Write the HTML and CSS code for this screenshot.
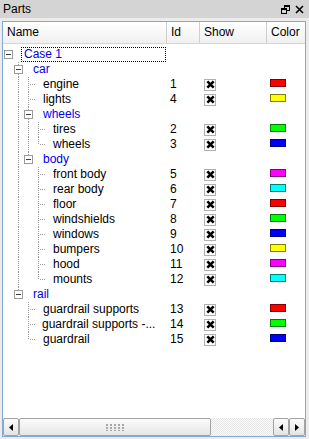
FILE: index.html
```html
<!DOCTYPE html>
<html>
<head>
<meta charset="utf-8">
<link rel="stylesheet" href="styles.css">
</head>
<body>
<div class="title">
  <span class="title-text">Parts</span>
  <span class="title-icons">
    <svg width="9" height="9" viewBox="0 0 9 9"><rect x="3.5" y="0.5" width="5" height="5" fill="none" stroke="#000"/><rect x="3" y="0" width="6" height="2"/><rect x="0.5" y="3.5" width="5" height="5" fill="#d4d4d4" stroke="#000"/><rect x="0" y="3" width="6" height="2"/></svg>
    <svg width="9" height="9" viewBox="0 0 9 9"><path d="M1 1L8 8M8 1L1 8" stroke="#000" stroke-width="1.6"/></svg>
  </span>
</div>
<div class="panel">
  <div class="header">
    <div class="hcell">Name</div>
    <div class="hcell">Id</div>
    <div class="hcell">Show</div>
    <div class="hcell last">Color</div>
  </div>
  <div class="rows">
    <div class="row">
      <div class="c-name"><span class="ind"><span class="box"></span></span><span class="lbl grp focus">Case 1</span></div>
      <div></div><div></div><div></div>
    </div>
    <div class="row">
      <div class="c-name"><span class="ind"></span><span class="ind v"><span class="box"></span></span><span class="lbl grp">car</span></div>
      <div></div><div></div><div></div>
    </div>
    <div class="row">
      <div class="c-name"><span class="ind"></span><span class="ind v"></span><span class="ind t"></span><span class="lbl">engine</span></div>
      <div class="c-id">1</div><div class="c-show"><span class="chk"><svg width="9" height="9" viewBox="0 0 9 9"><path d="M1.3 1.3L7.7 7.7M7.7 1.3L1.3 7.7" stroke="#000" stroke-width="2.6"/></svg></span></div><div class="c-color"><span class="sw red"></span></div>
    </div>
    <div class="row">
      <div class="c-name"><span class="ind"></span><span class="ind v"></span><span class="ind t"></span><span class="lbl">lights</span></div>
      <div class="c-id">4</div><div class="c-show"><span class="chk"><svg width="9" height="9" viewBox="0 0 9 9"><path d="M1.3 1.3L7.7 7.7M7.7 1.3L1.3 7.7" stroke="#000" stroke-width="2.6"/></svg></span></div><div class="c-color"><span class="sw yellow"></span></div>
    </div>
    <div class="row">
      <div class="c-name"><span class="ind"></span><span class="ind v"></span><span class="ind v"><span class="box"></span></span><span class="lbl grp">wheels</span></div>
      <div></div><div></div><div></div>
    </div>
    <div class="row">
      <div class="c-name"><span class="ind"></span><span class="ind v"></span><span class="ind v"></span><span class="ind t"></span><span class="lbl">tires</span></div>
      <div class="c-id">2</div><div class="c-show"><span class="chk"><svg width="9" height="9" viewBox="0 0 9 9"><path d="M1.3 1.3L7.7 7.7M7.7 1.3L1.3 7.7" stroke="#000" stroke-width="2.6"/></svg></span></div><div class="c-color"><span class="sw green"></span></div>
    </div>
    <div class="row">
      <div class="c-name"><span class="ind"></span><span class="ind v"></span><span class="ind v"></span><span class="ind l"></span><span class="lbl">wheels</span></div>
      <div class="c-id">3</div><div class="c-show"><span class="chk"><svg width="9" height="9" viewBox="0 0 9 9"><path d="M1.3 1.3L7.7 7.7M7.7 1.3L1.3 7.7" stroke="#000" stroke-width="2.6"/></svg></span></div><div class="c-color"><span class="sw blue"></span></div>
    </div>
    <div class="row">
      <div class="c-name"><span class="ind"></span><span class="ind v"></span><span class="ind h"><span class="box"></span></span><span class="lbl grp">body</span></div>
      <div></div><div></div><div></div>
    </div>
    <div class="row">
      <div class="c-name"><span class="ind"></span><span class="ind v"></span><span class="ind"></span><span class="ind t"></span><span class="lbl">front body</span></div>
      <div class="c-id">5</div><div class="c-show"><span class="chk"><svg width="9" height="9" viewBox="0 0 9 9"><path d="M1.3 1.3L7.7 7.7M7.7 1.3L1.3 7.7" stroke="#000" stroke-width="2.6"/></svg></span></div><div class="c-color"><span class="sw magenta"></span></div>
    </div>
    <div class="row">
      <div class="c-name"><span class="ind"></span><span class="ind v"></span><span class="ind"></span><span class="ind t"></span><span class="lbl">rear body</span></div>
      <div class="c-id">6</div><div class="c-show"><span class="chk"><svg width="9" height="9" viewBox="0 0 9 9"><path d="M1.3 1.3L7.7 7.7M7.7 1.3L1.3 7.7" stroke="#000" stroke-width="2.6"/></svg></span></div><div class="c-color"><span class="sw cyan"></span></div>
    </div>
    <div class="row">
      <div class="c-name"><span class="ind"></span><span class="ind v"></span><span class="ind"></span><span class="ind t"></span><span class="lbl">floor</span></div>
      <div class="c-id">7</div><div class="c-show"><span class="chk"><svg width="9" height="9" viewBox="0 0 9 9"><path d="M1.3 1.3L7.7 7.7M7.7 1.3L1.3 7.7" stroke="#000" stroke-width="2.6"/></svg></span></div><div class="c-color"><span class="sw red"></span></div>
    </div>
    <div class="row">
      <div class="c-name"><span class="ind"></span><span class="ind v"></span><span class="ind"></span><span class="ind t"></span><span class="lbl">windshields</span></div>
      <div class="c-id">8</div><div class="c-show"><span class="chk"><svg width="9" height="9" viewBox="0 0 9 9"><path d="M1.3 1.3L7.7 7.7M7.7 1.3L1.3 7.7" stroke="#000" stroke-width="2.6"/></svg></span></div><div class="c-color"><span class="sw green"></span></div>
    </div>
    <div class="row">
      <div class="c-name"><span class="ind"></span><span class="ind v"></span><span class="ind"></span><span class="ind t"></span><span class="lbl">windows</span></div>
      <div class="c-id">9</div><div class="c-show"><span class="chk"><svg width="9" height="9" viewBox="0 0 9 9"><path d="M1.3 1.3L7.7 7.7M7.7 1.3L1.3 7.7" stroke="#000" stroke-width="2.6"/></svg></span></div><div class="c-color"><span class="sw blue"></span></div>
    </div>
    <div class="row">
      <div class="c-name"><span class="ind"></span><span class="ind v"></span><span class="ind"></span><span class="ind t"></span><span class="lbl">bumpers</span></div>
      <div class="c-id">10</div><div class="c-show"><span class="chk"><svg width="9" height="9" viewBox="0 0 9 9"><path d="M1.3 1.3L7.7 7.7M7.7 1.3L1.3 7.7" stroke="#000" stroke-width="2.6"/></svg></span></div><div class="c-color"><span class="sw yellow"></span></div>
    </div>
    <div class="row">
      <div class="c-name"><span class="ind"></span><span class="ind v"></span><span class="ind"></span><span class="ind t"></span><span class="lbl">hood</span></div>
      <div class="c-id">11</div><div class="c-show"><span class="chk"><svg width="9" height="9" viewBox="0 0 9 9"><path d="M1.3 1.3L7.7 7.7M7.7 1.3L1.3 7.7" stroke="#000" stroke-width="2.6"/></svg></span></div><div class="c-color"><span class="sw magenta"></span></div>
    </div>
    <div class="row">
      <div class="c-name"><span class="ind"></span><span class="ind v"></span><span class="ind"></span><span class="ind l"></span><span class="lbl">mounts</span></div>
      <div class="c-id">12</div><div class="c-show"><span class="chk"><svg width="9" height="9" viewBox="0 0 9 9"><path d="M1.3 1.3L7.7 7.7M7.7 1.3L1.3 7.7" stroke="#000" stroke-width="2.6"/></svg></span></div><div class="c-color"><span class="sw cyan"></span></div>
    </div>
    <div class="row">
      <div class="c-name"><span class="ind"></span><span class="ind h"><span class="box"></span></span><span class="lbl grp">rail</span></div>
      <div></div><div></div><div></div>
    </div>
    <div class="row">
      <div class="c-name"><span class="ind"></span><span class="ind"></span><span class="ind t"></span><span class="lbl">guardrail supports</span></div>
      <div class="c-id">13</div><div class="c-show"><span class="chk"><svg width="9" height="9" viewBox="0 0 9 9"><path d="M1.3 1.3L7.7 7.7M7.7 1.3L1.3 7.7" stroke="#000" stroke-width="2.6"/></svg></span></div><div class="c-color"><span class="sw red"></span></div>
    </div>
    <div class="row">
      <div class="c-name"><span class="ind"></span><span class="ind"></span><span class="ind t"></span><span class="lbl tight">guardrail supports -...</span></div>
      <div class="c-id">14</div><div class="c-show"><span class="chk"><svg width="9" height="9" viewBox="0 0 9 9"><path d="M1.3 1.3L7.7 7.7M7.7 1.3L1.3 7.7" stroke="#000" stroke-width="2.6"/></svg></span></div><div class="c-color"><span class="sw green"></span></div>
    </div>
    <div class="row">
      <div class="c-name"><span class="ind"></span><span class="ind"></span><span class="ind l"></span><span class="lbl">guardrail</span></div>
      <div class="c-id">15</div><div class="c-show"><span class="chk"><svg width="9" height="9" viewBox="0 0 9 9"><path d="M1.3 1.3L7.7 7.7M7.7 1.3L1.3 7.7" stroke="#000" stroke-width="2.6"/></svg></span></div><div class="c-color"><span class="sw blue"></span></div>
    </div>
  </div>
  <div class="hscroll">
    <div class="sb-btn"><svg width="4" height="7" viewBox="0 0 4 7"><path d="M4 0L0 3.5L4 7Z"/></svg></div>
    <div class="sb-thumb"><span class="grip"></span></div>
    <div class="sb-track"></div>
    <div class="sb-btn"><svg width="4" height="7" viewBox="0 0 4 7"><path d="M4 0L0 3.5L4 7Z"/></svg></div>
    <div class="sb-btn"><svg width="4" height="7" viewBox="0 0 4 7"><path d="M0 0L4 3.5L0 7Z"/></svg></div>
  </div>
</div>
</body>
</html>
```
FILE: styles.css
```css
* { box-sizing: border-box; }
body {
  margin: 0;
  width: 309px;
  height: 439px;
  overflow: hidden;
  background: #ececec;
  font-family: "Liberation Sans", Arial, sans-serif;
  font-size: 12px;
  color: #000;
}
.title {
  height: 18px;
  background: #d4d4d4;
  display: flex;
  align-items: center;
  padding: 0 5px 0 3px;
}
.title-text { flex: 1; }
.title-icons { display: flex; gap: 5px; align-items: center; }
.panel {
  margin: 3px 3px 0 2px;
  height: 416px;
  border: 1px solid #7fa7d8;
  background: #fff;
  display: flex;
  flex-direction: column;
}
.header {
  height: 22px;
  display: grid;
  grid-template-columns: 164px 33px 67px 1fr;
  background: linear-gradient(#ffffff, #f0f0f0);
  border-bottom: 1px solid #d5d5d5;
}
.hcell {
  padding-left: 4px;
  line-height: 21px;
  border-right: 1px solid #cfcfcf;
  white-space: nowrap;
  overflow: hidden;
}
.hcell.last { border-right: none; }
.rows { flex: 1; padding-top: 3px; }
.row {
  height: 15px;
  display: grid;
  grid-template-columns: 164px 33px 67px 1fr;
  line-height: 15px;
}
.c-name { display: flex; white-space: nowrap; }
.ind {
  width: 10px;
  height: 15px;
  flex: none;
  position: relative;
  display: flex;
  align-items: flex-start;
}
.v::before, .t::before {
  content: "";
  position: absolute;
  left: 5px;
  top: 0;
  width: 1px;
  height: 15px;
  background: repeating-linear-gradient(to bottom, #9a9a9a 0 1px, transparent 1px 2px);
}
.l::before, .h::before {
  content: "";
  position: absolute;
  left: 5px;
  top: 0;
  width: 1px;
  height: 7px;
  background: repeating-linear-gradient(to bottom, #9a9a9a 0 1px, transparent 1px 2px);
}
.t::after, .l::after {
  content: "";
  position: absolute;
  left: 7px;
  top: 7px;
  width: 5px;
  height: 1px;
  background: repeating-linear-gradient(to right, #9a9a9a 0 1px, transparent 1px 2px);
}
.box {
  position: relative;
  z-index: 1;
  width: 9px;
  height: 9px;
  margin: 3px 0 0 1px;
  border: 1px solid #9a9a9a;
  background: #fff;
  display: flex;
  align-items: center;
  justify-content: center;
}
.box::after {
  content: "";
  width: 5px;
  height: 1px;
  background: #3c3c3c;
}
.lbl { margin-left: 10px; }
.lbl.tight { margin-left: 9px; }
.grp { color: #0000e6; }
.focus {
  margin-left: 8px;
  margin-right: 1px;
  padding-left: 2px;
  flex: 1;
  border: 1px dotted #000;
  line-height: 13px;
}
.c-id { padding-left: 3px; }
.c-show { padding-left: 4px; display: flex; align-items: center; }
.chk {
  width: 12px;
  height: 12px;
  border: 1px solid #b0b0b0;
  background: #fff;
  display: flex;
  align-items: center;
  justify-content: center;
}
.c-color { padding-left: 3px; padding-top: 2px; }
.sw { display: block; width: 16px; height: 8px; border: 1px solid rgba(0,0,0,0.5); }
.red { background: #ff0000; }
.yellow { background: #ffff00; }
.green { background: #00ff00; }
.blue { background: #0000ff; }
.magenta { background: #ff00ff; }
.cyan { background: #00ffff; }
.hscroll {
  height: 18px;
  display: flex;
  background: #f4f4f4;
}
.sb-btn {
  width: 16px;
  flex: none;
  border: 1px solid #a3a3a3;
  border-radius: 2px;
  background: linear-gradient(#fbfbfb, #e4e4e4);
  display: flex;
  align-items: center;
  justify-content: center;
}
.sb-thumb {
  width: 192px;
  flex: none;
  border: 1px solid #a3a3a3;
  border-radius: 2px;
  background: linear-gradient(#fbfbfb, #e6e6e6);
  display: flex;
  align-items: center;
  justify-content: center;
}
.grip {
  width: 19px;
  height: 7px;
  background: radial-gradient(circle at 1px 1px, #a8a8a8 0.8px, transparent 1px) 0 0 / 4px 3px;
}
.sb-track {
  flex: 1;
  background: repeating-conic-gradient(#e6e6e6 0 25%, #fbfbfb 0 50%) 0 0 / 2px 2px;
}
```
